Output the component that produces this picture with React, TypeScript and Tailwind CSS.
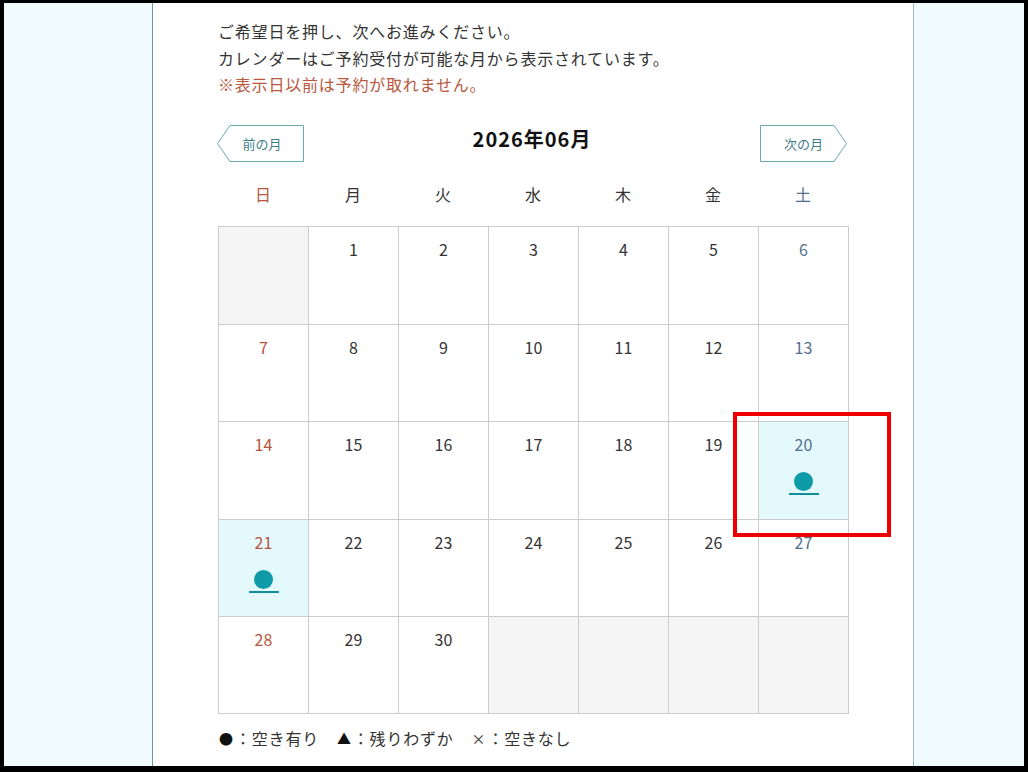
import React from 'react';

type Day = { n?: number; open?: boolean };

const WEEKDAYS = ['日', '月', '火', '水', '木', '金', '土'];

// June 2026 starts on a Monday
const DAYS: Day[] = [
  {},
  ...Array.from({ length: 30 }, (_, i) => ({ n: i + 1, open: i + 1 === 20 || i + 1 === 21 })),
  {},
  {},
  {},
  {},
];

function dayColor(col: number) {
  if (col === 0) return 'text-[#b5553d]';
  if (col === 6) return 'text-[#52708e]';
  return 'text-[#333]';
}

function MonthButton({ label, dir }: { label: string; dir: 'prev' | 'next' }) {
  const points =
    dir === 'prev' ? '0.5,18.5 13,0.5 86.5,0.5 86.5,36.5 13,36.5' : '0.5,0.5 74,0.5 86.5,18.5 74,36.5 0.5,36.5';
  return (
    <button className="relative flex h-[37px] w-[87px] items-center justify-center text-[13px] text-[#3f7c88]">
      <svg className="absolute inset-0" width="87" height="37" viewBox="0 0 87 37">
        <polygon points={points} fill="white" stroke="#6aa9b0" strokeWidth="1" />
      </svg>
      <span className={dir === 'prev' ? 'relative pl-[3px]' : 'relative'}>{label}</span>
    </button>
  );
}

function Calendar() {
  return (
    <div className="grid w-[631px] grid-cols-[repeat(7,90px)] grid-rows-[98px_97px_98px_97px_97px] border-t border-l border-[#cccccc]">
      {DAYS.map((d, i) => (
        <div
          key={i}
          className={`border-r border-b border-[#cccccc] pt-[10px] text-center ${
            d.n ? (d.open ? 'bg-[#e4f9fc]' : 'bg-white') : 'bg-[#f5f5f5]'
          }`}
        >
          {d.n ? <div className={`text-[16px] leading-6 ${dayColor(i % 7)}`}>{d.n}</div> : null}
          {d.open ? (
            <div className="flex flex-col items-center">
              <div className="mt-[15.5px] h-[19px] w-[19px] rounded-full bg-[#0e9aa6]" />
              <div className="mt-[2.5px] h-[2px] w-[30px] bg-[#0e8f99]" />
            </div>
          ) : null}
        </div>
      ))}
    </div>
  );
}

export default function App() {
  return (
    <div className="relative flex h-[772px] w-[1028px] overflow-hidden border-t-[3px] border-r-4 border-b-[6px] border-l-4 border-black font-['Noto_Sans_CJK_JP','Noto_Sans',sans-serif] text-[#333]">
      <div className="w-[149px] border-r border-[#5c9f9b] bg-[#f1fbfd]" />

      <main className="w-[760px] bg-white pt-[15px] pl-[65px]">
        <div className="text-[16px] leading-[26.5px] tracking-[0.8px]">
          <p>ご希望日を押し、次へお進みください。</p>
          <p>カレンダーはご予約受付が可能な月から表示されています。</p>
          <p className="text-[#b8583e]">※表示日以前は予約が取れません。</p>
        </div>

        <div className="mt-[27.5px] flex h-[37px] w-[631px] items-start justify-between pr-[2px]">
          <div className="-ml-px">
            <MonthButton label="前の月" dir="prev" />
          </div>
          <h2 className="text-[20px] leading-[28px] font-bold tracking-[1px] text-[#111]">2026年06月</h2>
          <MonthButton label="次の月" dir="next" />
        </div>

        <div className="grid h-[64px] w-[631px] grid-cols-[repeat(7,90px)] items-center text-center text-[16px]">
          {WEEKDAYS.map((w, i) => (
            <div key={w} className={dayColor(i)}>
              {w}
            </div>
          ))}
        </div>

        <Calendar />

        <p className="mt-[11px] flex items-center text-[16px] leading-[26.5px] tracking-[0.8px]">
          <span className="inline-flex w-[17px] justify-center text-[14px] text-[#111]">●</span>
          <span>：空き有り　</span>
          <span className="inline-flex w-[17px] justify-center text-[14px] text-[#111]">▲</span>
          <span>：残りわずか　</span>
          <span className="inline-flex w-[17px] justify-center text-[14px]">×</span>
          <span>：空きなし</span>
        </p>
      </main>

      <div className="flex-1 border-l border-[#9bbcbc] bg-[#f1fbfd]" />

      {/* annotation box */}
      <div className="absolute top-[409px] left-[729px] h-[125px] w-[158px] border-4 border-[#ee0000]" />
    </div>
  );
}
